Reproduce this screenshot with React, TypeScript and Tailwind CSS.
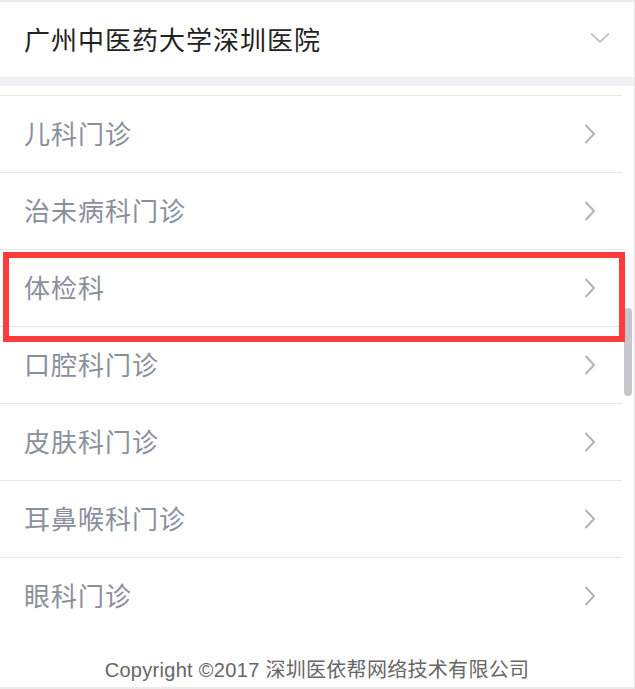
import React from "react";

const departments = [
  "儿科门诊",
  "治未病科门诊",
  "体检科",
  "口腔科门诊",
  "皮肤科门诊",
  "耳鼻喉科门诊",
  "眼科门诊",
];

const ChevronRight = () => (
  <svg width="12" height="20" viewBox="0 0 12 20" fill="none">
    <path d="M2 1.5 L10 10 L2 18.5" stroke="#b4b4b8" strokeWidth="2" strokeLinecap="round" strokeLinejoin="round" />
  </svg>
);

const ChevronDown = () => (
  <svg width="20" height="12" viewBox="0 0 20 12" fill="none">
    <path d="M1.5 2 L10 10 L18.5 2" stroke="#c4c4c8" strokeWidth="2" strokeLinecap="round" strokeLinejoin="round" />
  </svg>
);

export default function App() {
  return (
    <div
      className="relative w-[635px] h-[689px] bg-white border-r border-[#e6e6e6] overflow-hidden"
      style={{ fontFamily: '"Noto Sans CJK SC", "Noto Sans", sans-serif' }}
    >
      {/* hospital selector */}
      <div className="h-[77px] border-t-2 border-[#ebebeb] flex items-center justify-between pl-[24px] pr-[24px] pb-[3px]">
        <span className="text-[26px] text-[#222] tracking-[1px]">广州中医药大学深圳医院</span>
        <ChevronDown />
      </div>
      <div className="h-[9px] bg-[#efeff4]" />
      <div className="h-[9px]" />

      {/* department list */}
      <div className="w-[622px]">
        {departments.map((name) => (
          <div
            key={name}
            className="h-[77px] border-t border-[#e4e4e4] flex items-center justify-between pl-[24px] pr-[26px]"
          >
            <span className="text-[26px] text-[#8a8f9c] tracking-[1px] -mt-[4px]">{name}</span>
            <ChevronRight />
          </div>
        ))}
      </div>

      {/* footer */}
      <div className="h-[55px] border-b-2 border-[#ebebeb] flex items-end justify-center pb-[2px]">
        <span
          className="text-[20px] text-[#666] tracking-[0.3px]"
          style={{ fontFamily: '"Liberation Sans", "Noto Sans CJK SC", sans-serif' }}
        >
          Copyright ©2017 深圳医依帮网络技术有限公司
        </span>
      </div>

      {/* scrollbar thumb */}
      <div className="absolute left-[624px] top-[308px] w-[8px] h-[88px] rounded-full bg-[#c6c6cb]" />

      {/* highlight annotation */}
      <div className="absolute left-[3px] top-[252px] w-[622px] h-[90px] border-[6px] border-[#ff3b3b]" />
    </div>
  );
}
